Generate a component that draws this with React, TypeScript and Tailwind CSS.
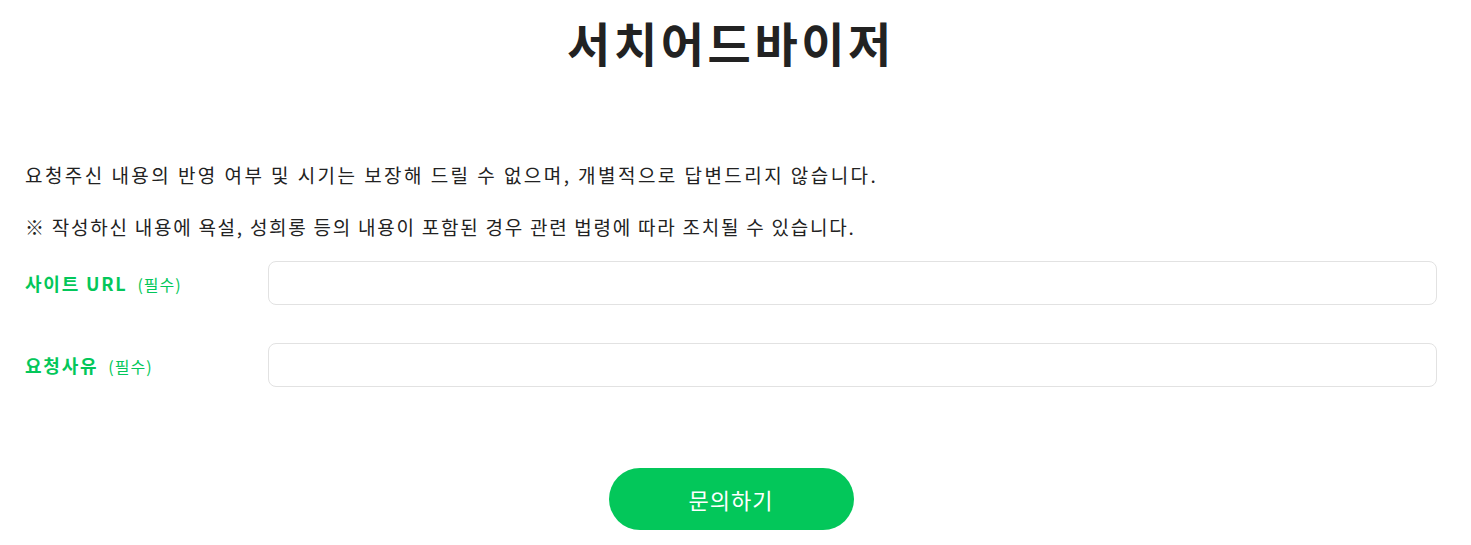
export default function App() {
  return (
    <div className="w-full bg-white pl-[25px] pr-[34px] text-[#222]" style={{ fontFamily: '"Noto Sans CJK KR", "Noto Sans", sans-serif' }}>
      <h1 className="pt-[8px] text-center text-[47px] font-bold leading-[68px] tracking-[3.6px] text-[#222]">서치어드바이저</h1>

      <div className="mt-[84px] text-[19px] leading-[30px]">
        <p className="tracking-[2.45px]">요청주신 내용의 반영 여부 및 시기는 보장해 드릴 수 없으며, 개별적으로 답변드리지 않습니다.</p>
        <p className="mt-[22px] tracking-[1.75px]">※ 작성하신 내용에 욕설, 성희롱 등의 내용이 포함된 경우 관련 법령에 따라 조치될 수 있습니다.</p>
      </div>

      <div className="mt-[19px] flex flex-col gap-[38px]">
        <div className="flex items-center">
          <label className="w-[243px] shrink-0 text-[18px] font-bold tracking-[1.8px] text-[#03c75a]">
            사이트 URL <span className="ml-1 text-[16px] font-normal tracking-[1px]">(필수)</span>
          </label>
          <input className="h-[44px] flex-1 rounded-[8px] border border-[#e2e2e2] px-3 outline-none" />
        </div>
        <div className="flex items-center">
          <label className="w-[243px] shrink-0 text-[18px] font-bold tracking-[1.8px] text-[#03c75a]">
            요청사유 <span className="ml-1 text-[16px] font-normal tracking-[1px]">(필수)</span>
          </label>
          <input className="h-[44px] flex-1 rounded-[8px] border border-[#e2e2e2] px-3 outline-none" />
        </div>
      </div>

      <div className="mt-[81px] flex justify-center">
        <button className="h-[62px] w-[245px] rounded-full bg-[#03c75a] text-[22px] tracking-[1px] text-white">문의하기</button>
      </div>
    </div>
  );
}
